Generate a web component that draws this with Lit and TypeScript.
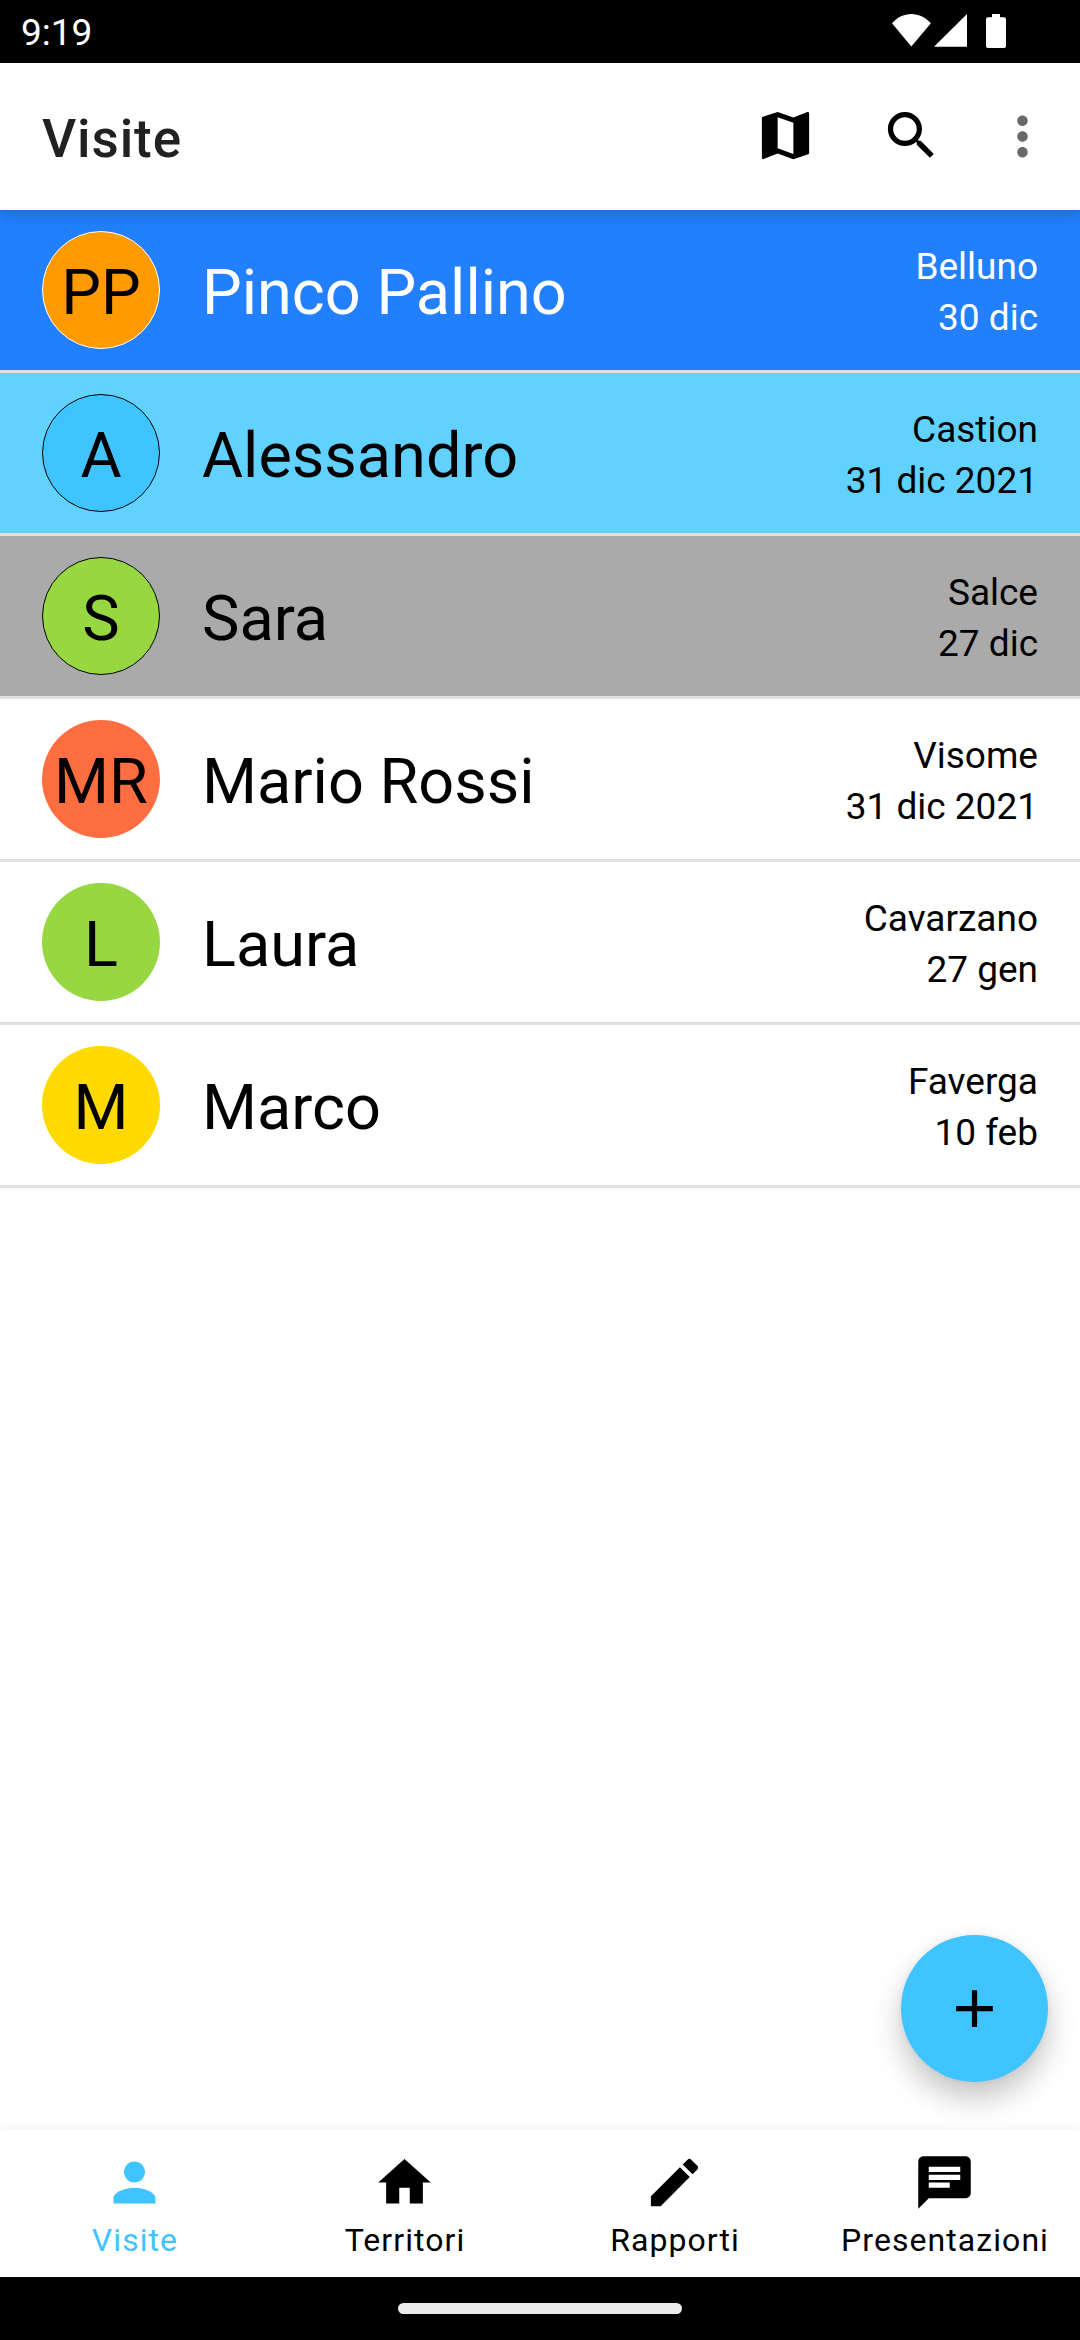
import { LitElement, html, css, svg } from "lit";
import { customElement, property } from "lit/decorators.js";
import { classMap } from "lit/directives/class-map.js";

interface Visit {
  initials: string;
  name: string;
  place: string;
  date: string;
  avatar: string;
  row: string;
}

const VISITS: Visit[] = [
  { initials: "PP", name: "Pinco Pallino", place: "Belluno", date: "30 dic", avatar: "orange", row: "blue" },
  { initials: "A", name: "Alessandro", place: "Castion", date: "31 dic 2021", avatar: "sky", row: "cyan" },
  { initials: "S", name: "Sara", place: "Salce", date: "27 dic", avatar: "green", row: "gray" },
  { initials: "MR", name: "Mario Rossi", place: "Visome", date: "31 dic 2021", avatar: "coral", row: "plain" },
  { initials: "L", name: "Laura", place: "Cavarzano", date: "27 gen", avatar: "green", row: "plain" },
  { initials: "M", name: "Marco", place: "Faverga", date: "10 feb", avatar: "yellow", row: "plain" },
];

const ICONS: Record<string, string> = {
  map: "M20.5 3l-.16.03L15 5.1 9 3 3.36 4.9c-.21.07-.36.25-.36.48V20.5c0 .28.22.5.5.5l.16-.03L9 18.9l6 2.1 5.64-1.9c.21-.07.36-.25.36-.48V3.5c0-.28-.22-.5-.5-.5zM15 19l-6-2.11V5l6 2.11V19z",
  search: "M15.5 14h-.79l-.28-.27C15.41 12.59 16 11.11 16 9.5 16 5.91 13.09 3 9.5 3S3 5.91 3 9.5 5.91 16 9.5 16c1.61 0 3.09-.59 4.23-1.57l.27.28v.79l5 4.99L20.49 19l-4.99-5zm-6 0C7.01 14 5 11.99 5 9.5S7.01 5 9.5 5 14 7.01 14 9.5 11.99 14 9.5 14z",
  more: "M12 8c1.1 0 2-.9 2-2s-.9-2-2-2-2 .9-2 2 .9 2 2 2zm0 2c-1.1 0-2 .9-2 2s.9 2 2 2 2-.9 2-2-.9-2-2-2zm0 6c-1.1 0-2 .9-2 2s.9 2 2 2 2-.9 2-2-.9-2-2-2z",
  person: "M12 12c2.21 0 4-1.79 4-4s-1.79-4-4-4-4 1.79-4 4 1.79 4 4 4zm0 2c-2.67 0-8 1.34-8 4v2h16v-2c0-2.66-5.33-4-8-4z",
  home: "M10 20v-6h4v6h5v-8h3L12 3 2 12h3v8z",
  edit: "M3 17.25V21h3.75L17.81 9.94l-3.75-3.75L3 17.25zM20.71 7.04c.39-.39.39-1.02 0-1.41l-2.34-2.34c-.39-.39-1.02-.39-1.41 0l-1.83 1.83 3.75 3.75 1.83-1.83z",
  chat: "M20 2H4c-1.1 0-1.99.9-1.99 2L2 22l4-4h14c1.1 0 2-.9 2-2V4c0-1.1-.9-2-2-2zM6 9h12v2H6V9zm8 5H6v-2h8v2zm4-6H6V6h12v2z",
  add: "M19 13h-6v6h-2v-6H5v-2h6V5h2v6h6v2z",
};

@customElement("app-icon")
export class AppIcon extends LitElement {
  @property() name = "";

  static styles = css`
    :host {
      display: block;
      width: 63px;
      height: 63px;
    }
    .glyph {
      display: block;
      width: 100%;
      height: 100%;
      fill: currentColor;
    }
  `;

  render() {
    return html`<svg class="glyph" viewBox="0 0 24 24">${svg`<path d=${ICONS[this.name] ?? ""}></path>`}</svg>`;
  }
}

@customElement("status-bar")
export class StatusBar extends LitElement {
  static styles = css`
    :host {
      display: flex;
      justify-content: space-between;
      height: 63px;
      box-sizing: border-box;
      padding: 0 74px 0 21px;
      background: #000;
      color: #fff;
    }
    .time {
      font-size: 37px;
      line-height: 66px;
    }
    .signals {
      display: block;
      width: 114px;
      height: 34px;
      margin-top: 14px;
      fill: #fff;
    }
  `;

  render() {
    return html`
      <span class="time">9:19</span>
      <svg class="signals" viewBox="0 0 114 34">
        <path d="M19.3 32.6L0 9.2C5 3.600 11.500 0 19.300 0S33.700 3.600 38.900 9.200z"></path>
        <path d="M42 32.800L75 0V32.800z"></path>
        <path d="M100 0h8v3.200h4a2 2 0 0 1 2 2V32a2 2 0 0 1-2 2H96a2 2 0 0 1-2-2V5.200a2 2 0 0 1 2-2h4z"></path>
      </svg>
    `;
  }
}

@customElement("top-bar")
export class TopBar extends LitElement {
  static styles = css`
    :host {
      display: flex;
      align-items: center;
      height: 147px;
      box-sizing: border-box;
      padding: 0 26px 0 42px;
      background: #fff;
      box-shadow: 0 5px 16px rgba(0, 0, 0, 0.17), 0 0 4px rgba(0, 0, 0, 0.05);
      position: relative;
      z-index: 1;
    }
    .title {
      flex: 1;
      margin: 0;
      padding-top: 5px;
      font-size: 53px;
      font-weight: 500;
      line-height: 62px;
      letter-spacing: 0.017em;
      color: #212121;
    }
    .actions {
      display: flex;
      gap: 63px;
      padding-bottom: 2px;
    }
    .more {
      margin: 1px 0 -1px -15px;
      color: #696969;
    }
  `;

  render() {
    return html`
      <h1 class="title">Visite</h1>
      <div class="actions">
        <app-icon name="map"></app-icon>
        <app-icon name="search"></app-icon>
        <app-icon class="more" name="more"></app-icon>
      </div>
    `;
  }
}

@customElement("visit-row")
export class VisitRow extends LitElement {
  @property({ attribute: false }) visit!: Visit;

  static styles = css`
    .row {
      display: flex;
      align-items: center;
      height: 163px;
      box-sizing: border-box;
      padding: 0 42px;
      border-bottom: 3px solid #e0e0e0;
      background: #fff;
      color: #000;
    }
    .blue {
      background: #2280ff;
      color: #fff;
    }
    .cyan {
      background: #61d1ff;
    }
    .gray {
      background: #aaa;
    }
    .avatar {
      flex: none;
      display: flex;
      justify-content: center;
      width: 118px;
      height: 118px;
      box-sizing: border-box;
      border-radius: 50%;
      font-size: 63px;
      line-height: 123px;
      color: #000;
    }
    .blue .avatar,
    .cyan .avatar,
    .gray .avatar {
      border: 1px solid #000;
      line-height: 121px;
    }
    .blue .avatar {
      border-color: #fff;
    }
    .orange {
      background: #ff9b00;
    }
    .sky {
      background: #40c4ff;
    }
    .green {
      background: #97d842;
    }
    .coral {
      background: #ff6e40;
    }
    .yellow {
      background: #ffda00;
    }
    .name {
      flex: 1;
      padding: 5px 0 0 42px;
      font-size: 63px;
      line-height: 74px;
    }
    .info {
      padding-top: 4px;
      text-align: right;
      font-size: 37px;
      line-height: 51px;
    }
  `;

  render() {
    const v = this.visit;
    return html`
      <div class=${classMap({ row: true, [v.row]: true })}>
        <div class=${classMap({ avatar: true, [v.avatar]: true })}>${v.initials}</div>
        <div class="name">${v.name}</div>
        <div class="info">
          <div>${v.place}</div>
          <div>${v.date}</div>
        </div>
      </div>
    `;
  }
}

@customElement("bottom-nav")
export class BottomNav extends LitElement {
  static styles = css`
    :host {
      display: grid;
      grid-template-columns: repeat(4, 1fr);
      height: 147px;
      background: #fff;
      box-shadow: 0 0 10px rgba(0, 0, 0, 0.09);
    }
    .tab {
      display: flex;
      flex-direction: column;
      align-items: center;
      padding-top: 21px;
      color: #000;
    }
    .selected {
      color: #40c4ff;
    }
    .icon {
      margin-right: 1px;
    }
    .label {
      margin-top: 8px;
      font-size: 32px;
      line-height: 37px;
      letter-spacing: 0.0333em;
      white-space: nowrap;
    }
  `;

  render() {
    const tabs = [
      ["person", "Visite"],
      ["home", "Territori"],
      ["edit", "Rapporti"],
      ["chat", "Presentazioni"],
    ];
    return html`${tabs.map(
      ([icon, label], i) => html`
        <div class=${classMap({ tab: true, selected: i === 0 })}>
          <app-icon class="icon" name=${icon}></app-icon>
          <span class="label">${label}</span>
        </div>
      `
    )}`;
  }
}

@customElement("app-root")
export class AppRoot extends LitElement {
  static styles = css`
    :host {
      display: flex;
      flex-direction: column;
      width: 1080px;
      height: 2340px;
      overflow: hidden;
      background: #fff;
      font-family: Roboto, "Liberation Sans", sans-serif;
    }
    .list {
      flex: 1;
      position: relative;
    }
    .fab {
      position: absolute;
      right: 32px;
      bottom: 48px;
      display: grid;
      place-items: center;
      width: 147px;
      height: 147px;
      border-radius: 50%;
      background: #40c4ff;
      color: #000;
      box-shadow: 0 16px 30px rgba(0, 0, 0, 0.23), 0 0 6px rgba(0, 0, 0, 0.06);
    }
    .gesture {
      display: flex;
      justify-content: center;
      height: 63px;
      background: #000;
    }
    .pill {
      width: 284px;
      height: 11px;
      margin-top: 26px;
      border-radius: 6px;
      background: #ebebeb;
    }
  `;

  render() {
    return html`
      <status-bar></status-bar>
      <top-bar></top-bar>
      <main class="list">
        ${VISITS.map((v) => html`<visit-row .visit=${v}></visit-row>`)}
        <div class="fab"><app-icon name="add"></app-icon></div>
      </main>
      <bottom-nav></bottom-nav>
      <div class="gesture"><div class="pill"></div></div>
    `;
  }
}
